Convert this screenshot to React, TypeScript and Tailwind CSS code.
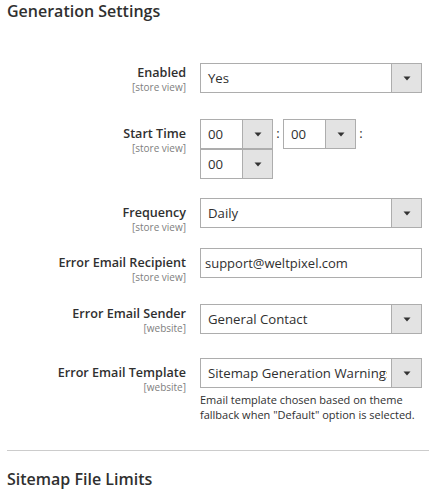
import React from "react";

const font = { fontFamily: '"Open Sans", "Liberation Sans", sans-serif' };

function Arrow() {
  return (
    <svg width="8" height="5" viewBox="0 0 8 5" className="block">
      <path d="M0.5 0.5 L7.5 0.5 L4 4.5 Z" fill="#333333" />
    </svg>
  );
}

function Select({ value, width = "w-[222px]" }: { value: string; width?: string }) {
  return (
    <div className={`flex h-[30px] ${width} border border-[#adadad] bg-white`}>
      <div className="mr-[4px] flex-1 min-w-0 overflow-hidden whitespace-nowrap pl-[7px] text-[13.2px] leading-[28px] text-[#303030]">
        {value}
      </div>
      <div className="flex w-[30px] shrink-0 items-center justify-center border-l border-[#adadad] bg-[#e3e3e3]">
        <Arrow />
      </div>
    </div>
  );
}

function Label({ title, scope, pt }: { title: string; scope: string; pt: string }) {
  return (
    <div className={`h-[30px] w-[179px] shrink-0 text-right ${pt}`}>
      <div className="text-[12.6px] font-semibold leading-[16px] text-[#303030]">{title}</div>
      <div className="text-[10px] leading-[12px] text-[#808080]">{scope}</div>
    </div>
  );
}

function Row({ title, scope, pt, mt, children }: { title: string; scope: string; pt: string; mt: string; children: React.ReactNode }) {
  return (
    <div className={`flex gap-[14px] ${mt}`}>
      <Label title={title} scope={scope} pt={pt} />
      <div className="w-[222px]">{children}</div>
    </div>
  );
}

export default function App() {
  return (
    <div className="h-[497px] w-[429px] overflow-hidden bg-white pl-[7px]" style={font}>
      <h2 className="text-[16px] font-semibold leading-[22px] text-[#303030]">Generation Settings</h2>

      <Row title="Enabled" scope="[store view]" pt="pt-[2px]" mt="mt-[41px]">
        <Select value="Yes" />
      </Row>

      <Row title="Start Time" scope="[store view]" pt="pt-[7px]" mt="mt-[26px]">
        <div className="flex items-center">
          <Select value="00" width="w-[73px]" />
          <span className="w-[10px] text-center text-[13px] text-[#303030]">:</span>
          <Select value="00" width="w-[73px]" />
          <span className="w-[10px] text-center text-[13px] text-[#303030]">:</span>
        </div>
        <Select value="00" width="w-[73px]" />
      </Row>

      <Row title="Frequency" scope="[store view]" pt="pt-[7px]" mt="mt-[19px]">
        <Select value="Daily" />
      </Row>

      <Row title="Error Email Recipient" scope="[store view]" pt="pt-[7px]" mt="mt-[20px]">
        <div className="h-[30px] border border-[#adadad] bg-white pl-[4px] text-[13px] leading-[28px] text-[#303030]">
          support@weltpixel.com
        </div>
      </Row>

      <Row title="Error Email Sender" scope="[website]" pt="pt-[2px]" mt="mt-[26px]">
        <Select value="General Contact" />
      </Row>

      <Row title="Error Email Template" scope="[website]" pt="pt-[7px]" mt="mt-[24px]">
        <Select value="Sitemap Generation Warnings" />
        <p className="mt-[4px] text-[11px] leading-[15px] text-[#303030]">
          Email template chosen based on theme fallback when "Default" option is selected.
        </p>
      </Row>

      <div className="mt-[28px] border-t border-[#cccccc]" />

      <h2 className="mt-[17px] text-[16px] font-semibold leading-[22px] text-[#303030]">Sitemap File Limits</h2>
    </div>
  );
}
